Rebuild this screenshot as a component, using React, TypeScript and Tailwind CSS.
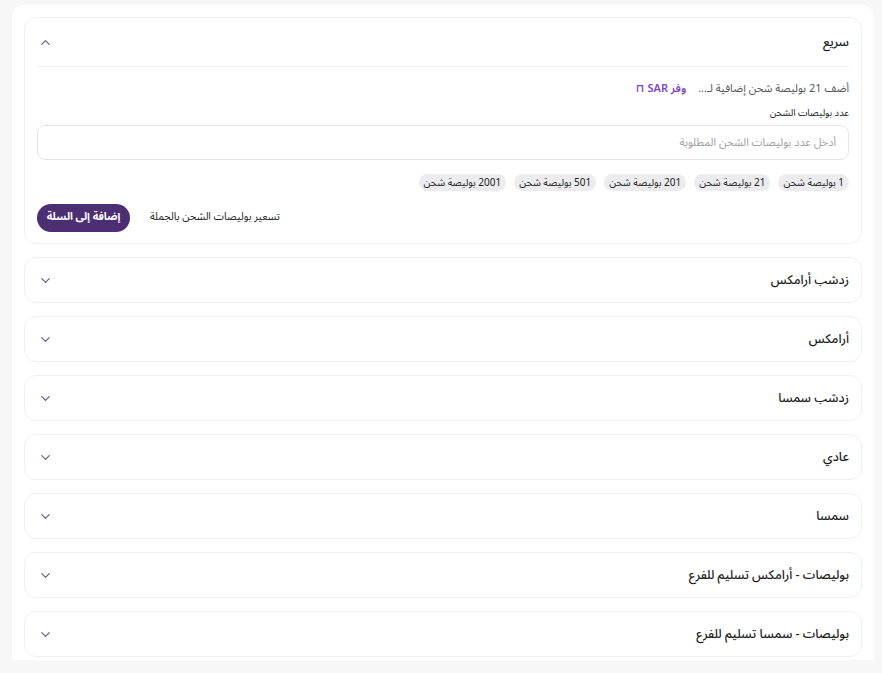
import React from 'react';
import { ChevronDown, ChevronUp } from 'lucide-react';

const chips = ['1 بوليصة شحن', '21 بوليصة شحن', '201 بوليصة شحن', '501 بوليصة شحن', '2001 بوليصة شحن'];

const sections = [
  'زدشب أرامكس',
  'أرامكس',
  'زدشب سمسا',
  'عادي',
  'سمسا',
  'بوليصات - أرامكس تسليم للفرع',
  'بوليصات - سمسا تسليم للفرع',
];

const font = { fontFamily: '"Noto Sans Arabic", "Noto Sans", "DejaVu Sans", sans-serif' };

export default function App() {
  return (
    <div className="h-[673px] overflow-hidden bg-[#f7f7f7] pt-[5px] pl-[12px] pr-[8px]" style={font}>
      <div dir="rtl" className="h-[655px] overflow-hidden rounded-t-xl bg-white px-3 pt-3 flex flex-col gap-[13px]">
        {/* OPEN SECTION */}
        <div className="rounded-xl border border-[#efefef] bg-white px-3 shrink-0">
          <div className="h-[48px] flex items-center justify-between">
            <span className="text-[12.5px] font-medium text-[#1b1b1b]">سريع</span>
            <ChevronUp size={15} strokeWidth={2} className="text-[#6e6180] ml-[1px]" />
          </div>
          <div className="border-t border-[#efefef] pt-[14px] pb-[11px]">
            <div className="flex items-center gap-3 h-4 text-[11px] text-[#555]">
              <span>أضف 21 بوليصة شحن إضافية لـ...</span>
              <span className="font-semibold text-[11px] text-[#7b45c9]">وفر SAR ⊓</span>
            </div>
            <div className="mt-[10px] text-[9.5px] text-[#222] leading-3">عدد بوليصات الشحن</div>
            <input
              className="mt-[6px] w-full h-[35px] rounded-lg border border-[#e4e4e7] px-3 text-[11px] text-[#333] placeholder:text-[#a0a0a0] outline-none"
              placeholder="أدخل عدد بوليصات الشحن المطلوبة"
              style={font}
            />
            <div className="mt-[14px] flex gap-2">
              {chips.map((c) => (
                <span key={c} className="h-[17px] flex items-center rounded-full bg-[#ececef] px-[5px] text-[10px] text-[#222]">
                  {c}
                </span>
              ))}
            </div>
            <div className="mt-[13px] flex items-center justify-end gap-5">
              <span className="text-[10.5px] text-[#222]">تسعير بوليصات الشحن بالجملة</span>
              <button className="h-[28px] w-[93px] rounded-full bg-[#4b2f72] text-[10.5px] font-bold text-white" style={font}>
                إضافة إلى السلة
              </button>
            </div>
          </div>
        </div>

        {/* CLOSED SECTIONS */}
        {sections.map((s) => (
          <div key={s} className="h-[46px] shrink-0 rounded-xl border border-[#efefef] bg-white px-3 flex items-center justify-between">
            <span className="text-[12.5px] font-medium text-[#1b1b1b]">{s}</span>
            <ChevronDown size={15} strokeWidth={2} className="text-[#6e6180] ml-[1px]" />
          </div>
        ))}
      </div>
    </div>
  );
}
